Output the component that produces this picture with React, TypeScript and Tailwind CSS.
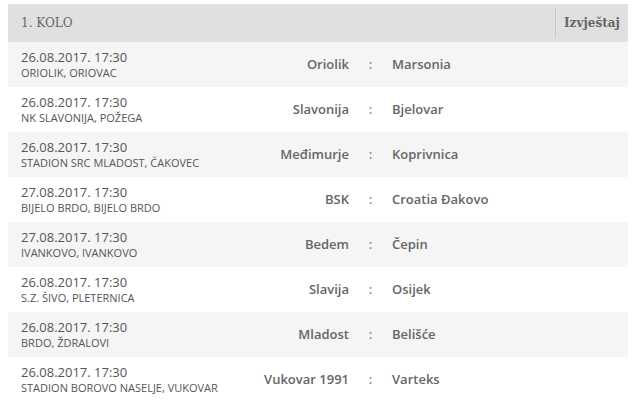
import React from "react";

interface Match {
  date: string;
  venue: string;
  home: string;
  away: string;
}

const matches: Match[] = [
  { date: "26.08.2017. 17:30", venue: "ORIOLIK, ORIOVAC", home: "Oriolik", away: "Marsonia" },
  { date: "26.08.2017. 17:30", venue: "NK SLAVONIJA, POŽEGA", home: "Slavonija", away: "Bjelovar" },
  { date: "26.08.2017. 17:30", venue: "STADION SRC MLADOST, ČAKOVEC", home: "Međimurje", away: "Koprivnica" },
  { date: "27.08.2017. 17:30", venue: "BIJELO BRDO, BIJELO BRDO", home: "BSK", away: "Croatia Đakovo" },
  { date: "27.08.2017. 17:30", venue: "IVANKOVO, IVANKOVO", home: "Bedem", away: "Čepin" },
  { date: "26.08.2017. 17:30", venue: "S.Z. ŠIVO, PLETERNICA", home: "Slavija", away: "Osijek" },
  { date: "26.08.2017. 17:30", venue: "BRDO, ŽDRALOVI", home: "Mladost", away: "Belišće" },
  { date: "26.08.2017. 17:30", venue: "STADION BOROVO NASELJE, VUKOVAR", home: "Vukovar 1991", away: "Varteks" },
];

const MatchRow: React.FC<{ match: Match; shaded: boolean }> = ({ match, shaded }) => (
  <div
    className={`flex h-[45px] items-center px-[13px] ${shaded ? "bg-[#f5f5f5]" : "bg-white"}`}
  >
    <div className="flex w-[230px] flex-col">
      <span className="text-[13px] leading-[17px] text-[#555]">{match.date}</span>
      <span className="text-[11px] leading-[14px] text-[#555]">{match.venue}</span>
    </div>
    <div className="w-[98px] text-right text-[13px] font-semibold text-[#666]">
      {match.home}
    </div>
    <div className="w-[43px] text-center text-[13px] font-semibold text-[#888]">:</div>
    <div className="flex-1 text-[13px] font-semibold text-[#666]">{match.away}</div>
  </div>
);

export default function App() {
  return (
    <div className="h-[400px] w-[640px] overflow-hidden bg-white pt-[4px] pl-[8px] font-['Open_Sans',sans-serif]">
      <div className="w-[620px]">
        <div className="flex h-[38px] items-center bg-[#e0e0e0] font-['DejaVu_Serif',serif] text-[12px] text-[#666]">
          <div className="flex-1 pl-[13px]">1. KOLO</div>
          <div className="h-[30px] w-px bg-[#c8c8c8]" />
          <div className="w-[72px] pl-[8px] font-semibold">Izvještaj</div>
        </div>
        {matches.map((m, i) => (
          <MatchRow key={i} match={m} shaded={i % 2 === 0} />
        ))}
      </div>
    </div>
  );
}
